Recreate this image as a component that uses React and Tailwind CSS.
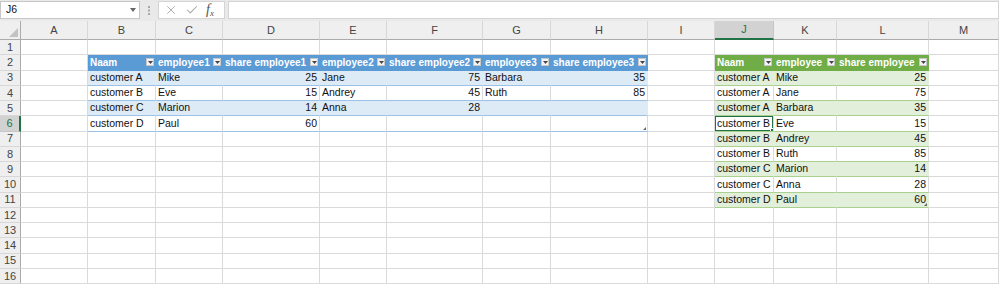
import React from 'react';
import { X, Check } from 'lucide-react';

const COLS = [
  ['A', 67], ['B', 68], ['C', 67], ['D', 97], ['E', 67], ['F', 96], ['G', 68],
  ['H', 97], ['I', 67], ['J', 59], ['K', 63], ['L', 92], ['M', 70],
];

// blue table B2:H6
const T1_COLS = ['B', 'C', 'D', 'E', 'F', 'G', 'H'];
const T1_HEAD = ['Naam', 'employee1', 'share employee1', 'employee2', 'share employee2', 'employee3', 'share employee3'];
const T1_ROWS = [
  ['customer A', 'Mike', 25, 'Jane', 75, 'Barbara', 35],
  ['customer B', 'Eve', 15, 'Andrey', 45, 'Ruth', 85],
  ['customer C', 'Marion', 14, 'Anna', 28, '', ''],
  ['customer D', 'Paul', 60, '', '', '', ''],
];

// green table J2:L11
const T2_COLS = ['J', 'K', 'L'];
const T2_HEAD = ['Naam', 'employee', 'share employee'];
const T2_ROWS = [
  ['customer A', 'Mike', 25],
  ['customer A', 'Jane', 75],
  ['customer A', 'Barbara', 35],
  ['customer B', 'Eve', 15],
  ['customer B', 'Andrey', 45],
  ['customer B', 'Ruth', 85],
  ['customer C', 'Marion', 14],
  ['customer C', 'Anna', 28],
  ['customer D', 'Paul', 60],
];

const THEMES = {
  blue: { head: 'bg-[#5b9bd5] border-[#5b9bd5]', band: 'bg-[#ddebf7] border-r-[#ddebf7]', line: 'border-b-[#9bc2e6]' },
  green: { head: 'bg-[#70ad47] border-[#70ad47]', band: 'bg-[#e2efda] border-r-[#e2efda]', line: 'border-b-[#a9d08e]' },
};

function FilterButton() {
  return (
    <span className="ml-auto mr-[1px] flex h-[8px] w-[8px] shrink-0 items-center justify-center border border-[#c8c8c8] bg-[#f4f4f4]">
      <svg width="5" height="3" viewBox="0 0 5 3">
        <path d="M0 0h5L2.5 3z" fill="#444" />
      </svg>
    </span>
  );
}

function lookup(col, row) {
  const i1 = T1_COLS.indexOf(col);
  if (i1 >= 0 && row >= 2 && row <= 6) {
    if (row === 2) return { theme: 'blue', head: true, value: T1_HEAD[i1] };
    return { theme: 'blue', band: row % 2 === 1, value: T1_ROWS[row - 3][i1] };
  }
  const i2 = T2_COLS.indexOf(col);
  if (i2 >= 0 && row >= 2 && row <= 11) {
    if (row === 2) return { theme: 'green', head: true, value: T2_HEAD[i2] };
    return { theme: 'green', band: row % 2 === 1, value: T2_ROWS[row - 3][i2] };
  }
  return null;
}

function Cell({ col, row }) {
  const info = lookup(col, row);
  const selected = col === 'J' && row === 6;
  const tableEnd = (col === 'H' && row === 6) || (col === 'L' && row === 11);

  let cls = 'relative flex items-center overflow-hidden whitespace-nowrap border-r border-b border-[#dadada] bg-white';
  let content = null;

  if (info) {
    const t = THEMES[info.theme];
    if (info.head) {
      cls = `relative flex items-center overflow-hidden whitespace-nowrap border-r border-b ${t.head}`;
      content = (
        <>
          <span className="pl-[2px] text-[10px] font-bold text-white">{info.value}</span>
          <FilterButton />
        </>
      );
    } else {
      cls = `relative flex items-center overflow-hidden whitespace-nowrap border-r border-b ${t.line} ${
        info.band ? t.band : 'bg-white border-r-[#dadada]'
      }`;
      const num = typeof info.value === 'number';
      content = (
        <span className={num ? 'ml-auto pr-[2px]' : 'pl-[2px]'}>{info.value}</span>
      );
    }
  }

  return (
    <div className={cls}>
      {content}
      {selected && (
        <div className="absolute inset-[-1px] border-2 border-[#217346]">
          <div className="absolute bottom-[-3px] right-[-3px] h-[5px] w-[5px] border border-white bg-[#217346]" />
        </div>
      )}
      {tableEnd && (
        <svg className="absolute bottom-[1px] right-[1px]" width="3" height="3" viewBox="0 0 3 3">
          <path d="M3 0v3H0z" fill="#666" />
        </svg>
      )}
    </div>
  );
}

function FormulaBar() {
  return (
    <div className="flex h-[21px] items-start bg-[#e9e9e9] pt-[1px]">
      <div className="flex h-[18px] w-[140px] items-center justify-between border border-[#c6c6c6] bg-white pl-[5px] pr-[3px]">
        <span>J6</span>
        <svg width="6" height="4" viewBox="0 0 6 4">
          <path d="M0 0h6L3 4z" fill="#666" />
        </svg>
      </div>
      <div className="flex h-[18px] w-[18px] items-center justify-center">
        <svg width="2" height="9" viewBox="0 0 2 9">
          <rect x="0" y="0" width="2" height="2" fill="#a8a8a8" />
          <rect x="0" y="3.5" width="2" height="2" fill="#a8a8a8" />
          <rect x="0" y="7" width="2" height="2" fill="#a8a8a8" />
        </svg>
      </div>
      <div className="flex h-[18px] w-[67px] items-center gap-[7px] border border-[#d4d4d4] bg-white pl-[5px]">
        <X size={14} strokeWidth={1.5} className="text-[#a6a6a6]" />
        <Check size={14} strokeWidth={1.8} className="text-[#a6a6a6]" />
        <span className="font-['Liberation_Serif',serif] text-[14px] italic leading-none text-[#555]">
          f<sub className="text-[9px]">x</sub>
        </span>
      </div>
      <div className="ml-[3px] h-[18px] flex-1 border border-[#d4d4d4] bg-white" />
    </div>
  );
}

export default function App() {
  const rows = Array.from({ length: 16 }, (_, i) => i + 1);
  return (
    <div className="h-[286px] w-[999px] overflow-hidden bg-white font-['Liberation_Sans',sans-serif] text-[10.5px] text-[#111]">
      <FormulaBar />
      <div className="grid grid-cols-[21px_67px_68px_67px_97px_67px_96px_68px_97px_67px_59px_63px_92px_70px] grid-rows-[19px_repeat(16,15.25px)]">
        {/* column headers */}
        <div className="relative border-r border-b border-[#ababab] bg-[#efefef]">
          <svg className="absolute bottom-[2px] right-[2px]" width="9" height="9" viewBox="0 0 9 9">
            <path d="M9 0v9H0z" fill="#c2c2c2" />
          </svg>
        </div>
        {COLS.map(([c]) => (
          <div
            key={c}
            className={`flex items-center justify-center border-r ${
              c === 'J'
                ? 'border-b-2 border-r-[#c6c6c6] border-b-[#217346] bg-[#d2d2d2] text-[#217346]'
                : 'border-b border-r-[#d7d7d7] border-b-[#ababab] bg-[#efefef] text-[#444]'
            } text-[11px]`}
          >
            {c}
          </div>
        ))}
        {rows.map((r) => (
          <React.Fragment key={r}>
            <div
              className={`flex items-center justify-center border-b text-[11px] ${
                r === 6
                  ? 'border-r-2 border-r-[#217346] border-b-[#c6c6c6] bg-[#d2d2d2] text-[#217346]'
                  : 'border-r border-r-[#ababab] border-b-[#d7d7d7] bg-[#efefef] text-[#444]'
              }`}
            >
              {r}
            </div>
            {COLS.map(([c]) => (
              <Cell key={c} col={c} row={r} />
            ))}
          </React.Fragment>
        ))}
      </div>
    </div>
  );
}
